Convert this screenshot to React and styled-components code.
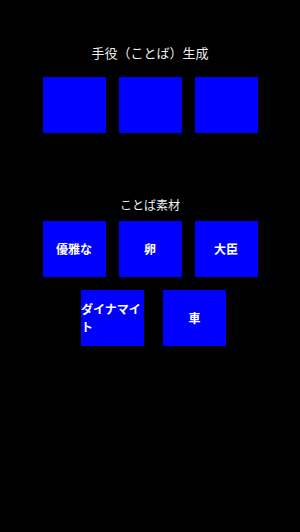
import React from 'react';
import styled, { createGlobalStyle } from 'styled-components';

const GlobalStyle = createGlobalStyle`
    html, body {
        margin: 0;
        padding: 0;
        background: #000;
    }

    body {
        font-family: "Noto Sans CJK JP", "Noto Sans", sans-serif;
        color: #fff;
    }
`;

const Page = styled.main`
    width: 300px;
    height: 532px;
    padding-top: 44px;
    box-sizing: border-box;
    display: flex;
    flex-direction: column;
    align-items: center;
`;

const Section = styled.section`
    display: flex;
    flex-direction: column;
    align-items: center;
    margin-bottom: ${({ spaced }) => (spaced ? '50px' : '0')};
`;

const Title = styled.h2`
    margin: 0 0 ${({ gap }) => gap}px;
    font-size: ${({ size }) => size}px;
    line-height: 18px;
    font-weight: 400;
    color: #eee;
`;

const Row = styled.div`
    display: flex;
    justify-content: center;
    gap: ${({ gap }) => gap}px;
    padding-left: ${({ shift }) => shift || 0}px;
    margin-bottom: 13px;
`;

const Tile = styled.div`
    width: 63px;
    height: 56px;
    background: #0000ff;
    display: flex;
    align-items: center;
    justify-content: center;
    text-align: left;
    font-size: 12px;
    line-height: 18px;
    font-weight: 700;
    color: #fff;
    word-break: break-all;
`;

const words = [['優雅な', '卵', '大臣'], ['ダイナマイト', '車']];

const App = () => {
    return (
        <>
            <GlobalStyle />
            <Page>
                <Section spaced>
                    <Title size={13} gap={15}>手役（ことば）生成</Title>
                    <Row gap={13}>
                        <Tile />
                        <Tile />
                        <Tile />
                    </Row>
                </Section>
                <Section>
                    <Title size={12} gap={7}>ことば素材</Title>
                    <Row gap={13}>
                        {words[0].map((w) => <Tile key={w}>{w}</Tile>)}
                    </Row>
                    <Row gap={19} shift={7}>
                        {words[1].map((w) => <Tile key={w}>{w}</Tile>)}
                    </Row>
                </Section>
            </Page>
        </>
    );
};

export default App;
